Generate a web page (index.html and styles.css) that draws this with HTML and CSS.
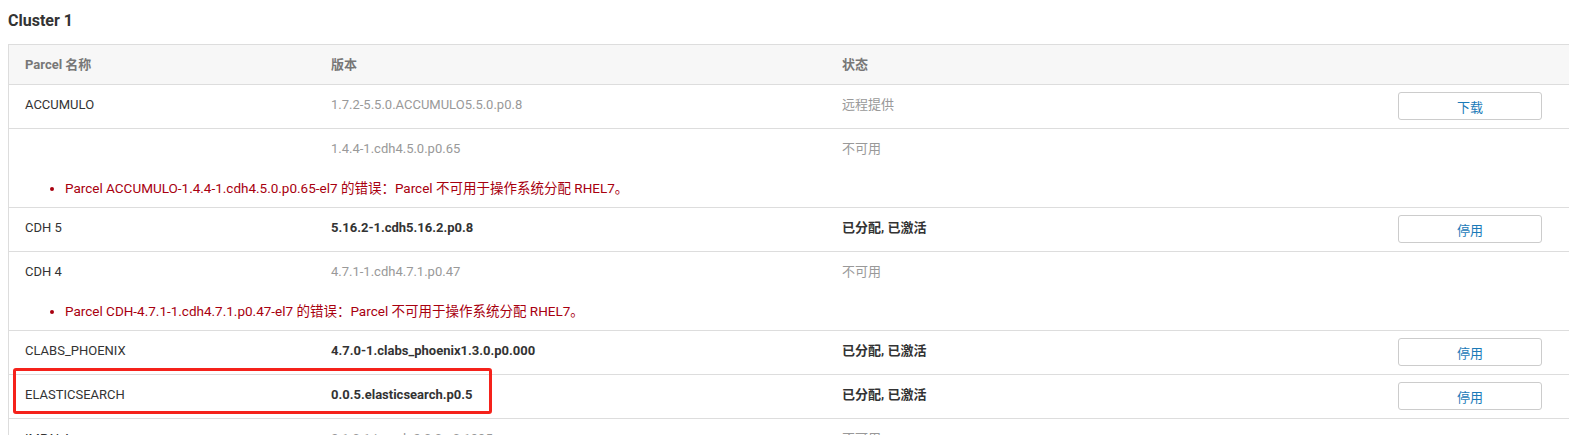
FILE: index.html
```html
<!DOCTYPE html>
<html lang="zh-CN">
<head>
<meta charset="utf-8">
<title>Parcels</title>
<link rel="stylesheet" href="styles.css">
</head>
<body>
<h2 class="cluster-title">Cluster 1</h2>
<div class="parcel-table">
  <div class="row head">
    <div class="line">
      <div class="cell">Parcel 名称</div>
      <div class="cell">版本</div>
      <div class="cell">状态</div>
      <div class="cell"></div>
    </div>
  </div>
  <div class="row">
    <div class="line">
      <div class="cell name">ACCUMULO</div>
      <div class="cell muted">1.7.2-5.5.0.ACCUMULO5.5.0.p0.8</div>
      <div class="cell muted">远程提供</div>
      <div class="cell action"><button class="btn">下载</button></div>
    </div>
  </div>
  <div class="row">
    <div class="line">
      <div class="cell name"></div>
      <div class="cell muted">1.4.4-1.cdh4.5.0.p0.65</div>
      <div class="cell muted">不可用</div>
      <div class="cell"></div>
    </div>
    <div class="errors">
      <ul><li>Parcel ACCUMULO-1.4.4-1.cdh4.5.0.p0.65-el7 的错误：Parcel 不可用于操作系统分配 RHEL7。</li></ul>
    </div>
  </div>
  <div class="row">
    <div class="line">
      <div class="cell name">CDH 5</div>
      <div class="cell strong">5.16.2-1.cdh5.16.2.p0.8</div>
      <div class="cell strong">已分配, 已激活</div>
      <div class="cell action"><button class="btn">停用</button></div>
    </div>
  </div>
  <div class="row">
    <div class="line">
      <div class="cell name">CDH 4</div>
      <div class="cell muted">4.7.1-1.cdh4.7.1.p0.47</div>
      <div class="cell muted">不可用</div>
      <div class="cell"></div>
    </div>
    <div class="errors">
      <ul><li>Parcel CDH-4.7.1-1.cdh4.7.1.p0.47-el7 的错误：Parcel 不可用于操作系统分配 RHEL7。</li></ul>
    </div>
  </div>
  <div class="row">
    <div class="line">
      <div class="cell name">CLABS_PHOENIX</div>
      <div class="cell strong">4.7.0-1.clabs_phoenix1.3.0.p0.000</div>
      <div class="cell strong">已分配, 已激活</div>
      <div class="cell action"><button class="btn">停用</button></div>
    </div>
  </div>
  <div class="row">
    <div class="line">
      <div class="cell name">ELASTICSEARCH</div>
      <div class="cell strong">0.0.5.elasticsearch.p0.5</div>
      <div class="cell strong">已分配, 已激活</div>
      <div class="cell action"><button class="btn">停用</button></div>
    </div>
  </div>
  <div class="row">
    <div class="line">
      <div class="cell name">IMPALA</div>
      <div class="cell muted">2.1.0-1.impala2.0.0.p0.1995</div>
      <div class="cell muted">不可用</div>
      <div class="cell"></div>
    </div>
  </div>
</div>
<div class="highlight"></div>
</body>
</html>
```
FILE: styles.css
```css
html, body {
  overflow: hidden;
}
body {
  margin: 8px;
  font-family: Roboto, "Noto Sans CJK SC", sans-serif;
  font-size: 13px;
  color: #333;
  background: #fff;
  position: relative;
}
.cluster-title {
  margin: 3px 0 13px;
  font-size: 16px;
  line-height: 20px;
  font-weight: 700;
  color: #333;
}
.parcel-table {
  width: 1640px;
  border-top: 1px solid #ddd;
  border-left: 1px solid #ddd;
}
.row {
  border-bottom: 1px solid #ddd;
}
.line {
  display: grid;
  grid-template-columns: 306px 511px 556px 1fr;
  height: 43px;
  align-items: start;
}
.head {
  background: #f7f7f7;
}
.head .line {
  height: 39px;
  font-weight: 700;
  color: #777;
}
.cell {
  padding: 10px 16px 0;
  line-height: 19px;
  white-space: nowrap;
}
.cell.action {
  padding-top: 7px;
}
.muted {
  color: #999;
}
.strong {
  font-weight: 700;
  color: #333;
}
.btn {
  display: block;
  width: 144px;
  height: 28px;
  border: 1px solid #ccc;
  border-radius: 3px;
  background: #fff;
  color: #1a7ab8;
  font-family: Roboto, "Noto Sans CJK SC", sans-serif;
  font-size: 13px;
  padding: 0;
}
.errors {
  padding: 7px 16px 9px;
  height: 19px;
  box-sizing: content-box;
}
.errors ul {
  margin: 0;
  padding-left: 40px;
  line-height: 19px;
  font-size: 13.5px;
  color: #a8000f;
  white-space: nowrap;
}
.highlight {
  position: absolute;
  left: 5px;
  top: 360px;
  width: 473px;
  height: 40px;
  border: 3px solid #f5221b;
  border-radius: 3px;
}
```
